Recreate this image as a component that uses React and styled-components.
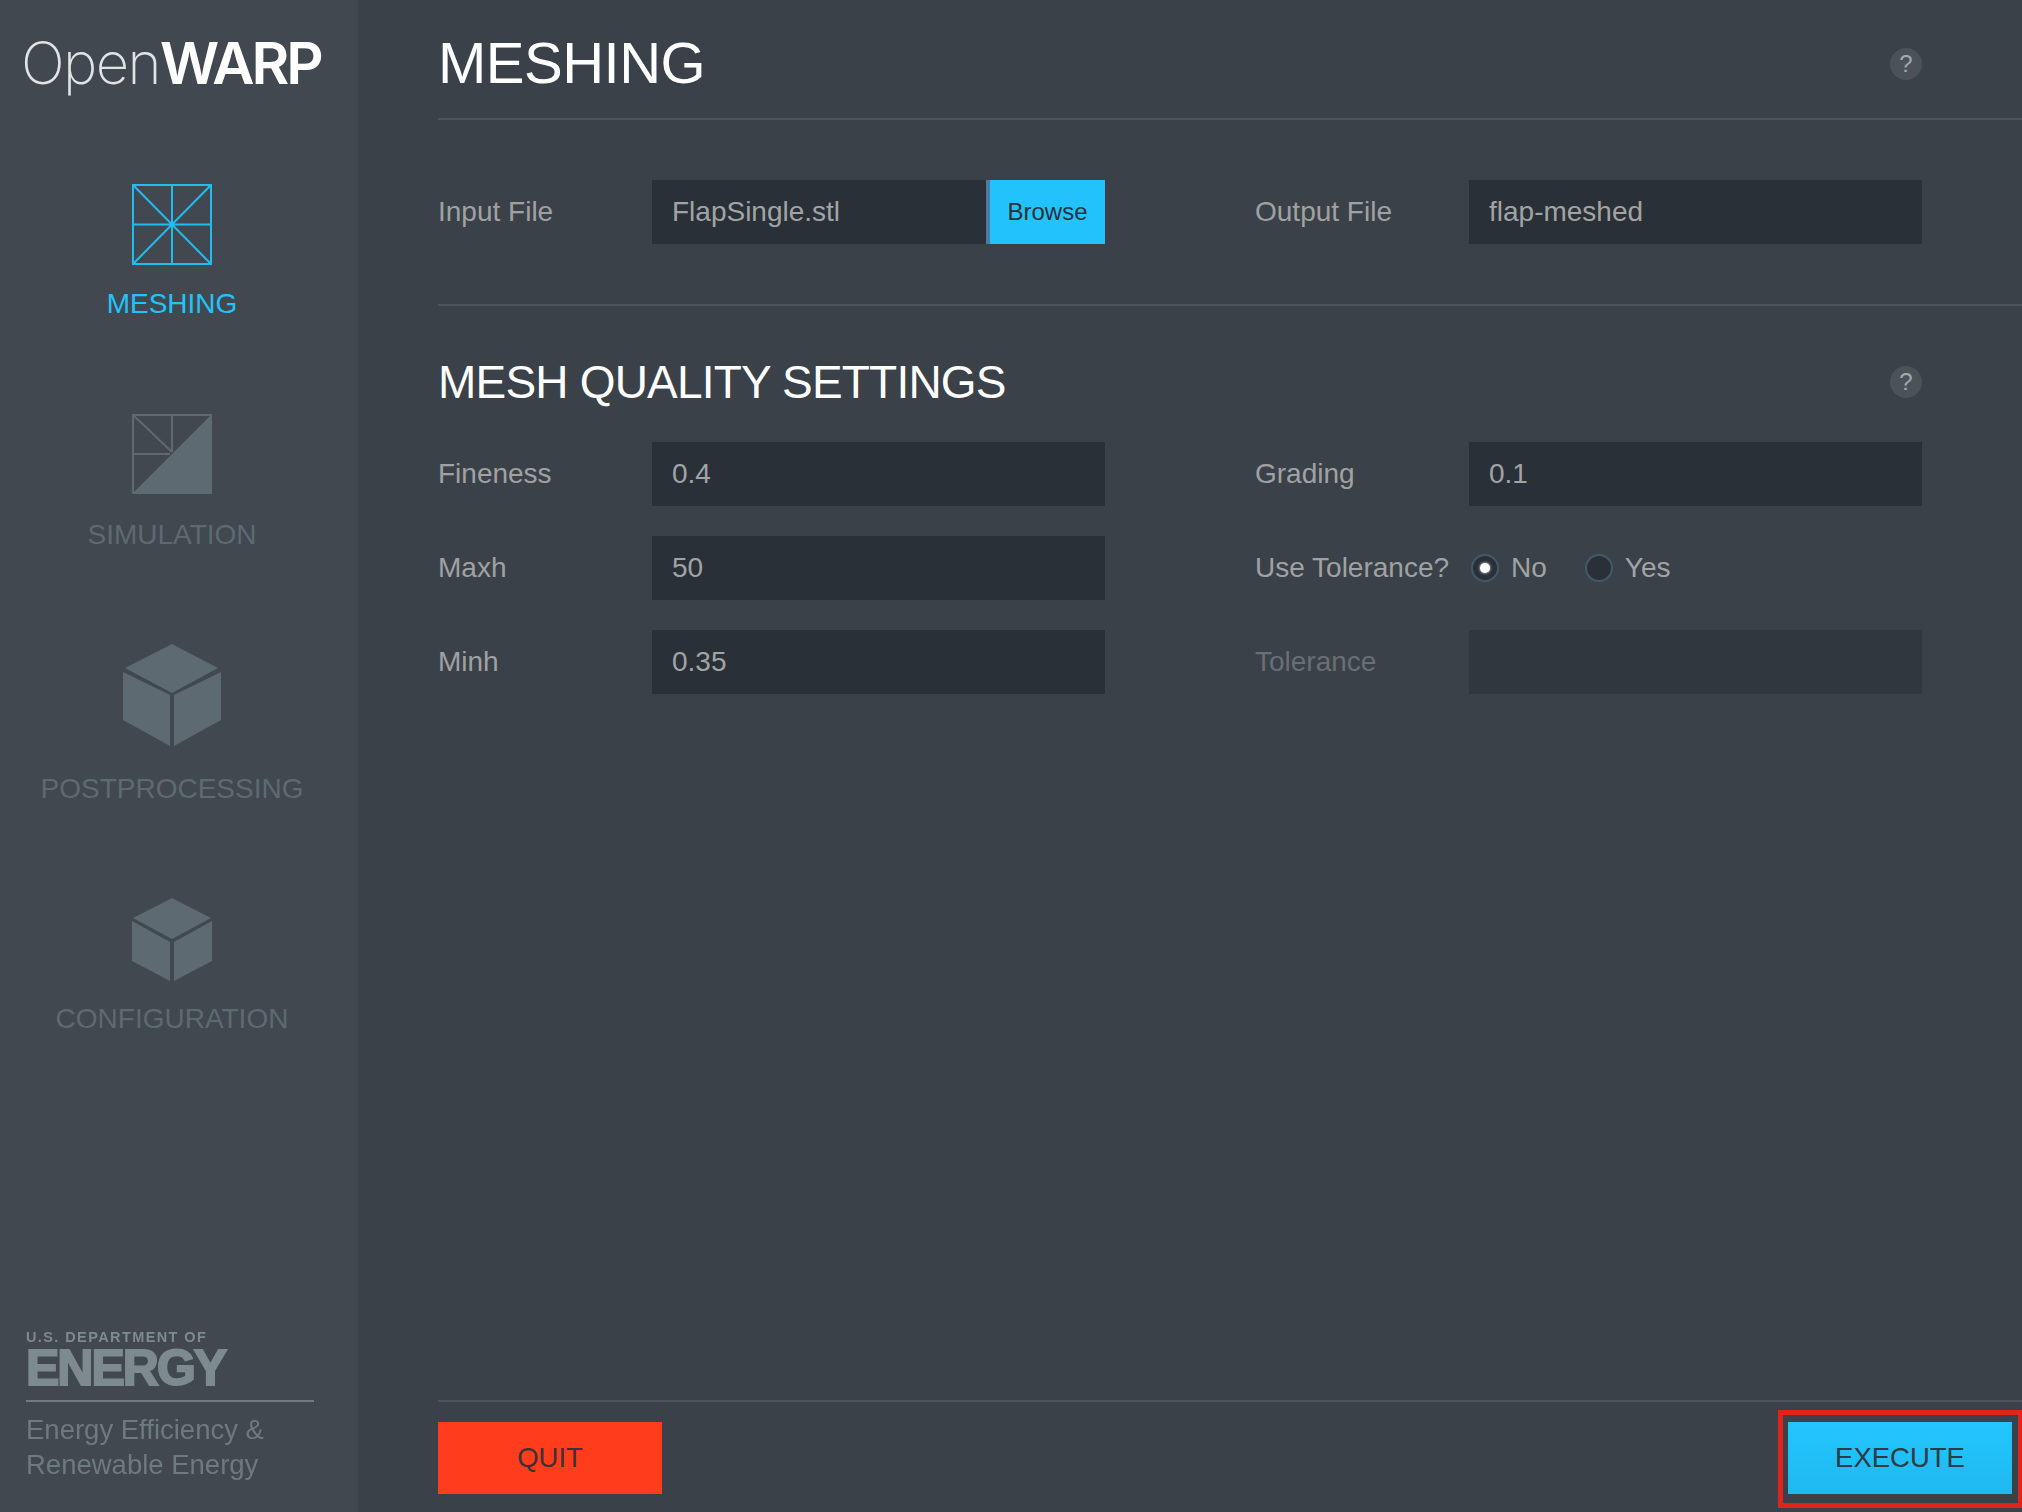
import React from "react";
import styled, { createGlobalStyle } from "styled-components";

const GlobalStyle = createGlobalStyle`
  html, body {
    margin: 0;
    padding: 0;
    background: #3a4149;
  }
  * {
    box-sizing: border-box;
  }
`;

const MeshIcon = () => (
  <svg width="80" height="81" viewBox="0 0 80 81" fill="none" stroke="#22bdf0" strokeWidth="2">
    <rect x="1" y="1" width="78" height="79" />
    <path d="M1 1 L79 80 M79 1 L1 80 M40 1 V80 M1 40.5 H79" />
    <circle cx="40" cy="40.5" r="2.5" fill="#22bdf0" stroke="none" />
  </svg>
);

const SimulationIcon = () => (
  <svg width="80" height="81" viewBox="0 0 80 81" fill="none" stroke="#5d6a72" strokeWidth="2">
    <rect x="1" y="1" width="78" height="78" />
    <path d="M1 1 L40 38 M40 1 V38 M1 40 H38" />
    <path d="M80 0 V80 H0 Z" fill="#5d6a72" stroke="none" />
  </svg>
);

const BigCube = () => (
  <svg width="98" height="103" viewBox="0 0 98 103" fill="#5d6a72">
    <path d="M49 0 L95 24 L49 49 L2 24 Z" />
    <path d="M0 28 L47 51 V102 L0 76 Z" />
    <path d="M51 51 L98 28 V76 L51 102 Z" />
  </svg>
);

const SmallCube = () => (
  <svg width="80" height="84" viewBox="0 0 80 84" fill="#5d6a72">
    <path d="M40 0 L79 20 L40 41 L1 20 Z" />
    <path d="M0 23 L38 44 V83 L0 63 Z" />
    <path d="M42 44 L80 23 V63 L42 83 Z" />
  </svg>
);

function NavEntry(props) {
  return (
    <NavItem $active={props.active} $height={props.height}>
      <NavIcon $height={props.iconHeight}>{props.icon}</NavIcon>
      <NavLabel>{props.label}</NavLabel>
    </NavItem>
  );
}

function Field(props) {
  return (
    <FieldRow>
      <FieldLabel $disabled={props.disabled}>{props.label}</FieldLabel>
      {props.children ? (
        props.children
      ) : (
        <TextBox $disabled={props.disabled}>{props.value}</TextBox>
      )}
    </FieldRow>
  );
}

function App() {
  return (
    <Page>
      <GlobalStyle />
      <Sidebar>
        <Logo>
          <LogoThin>Open</LogoThin>
          <LogoBold>WARP</LogoBold>
        </Logo>
        <Nav>
          <NavEntry active height={230} iconHeight={84} icon={<MeshIcon />} label="MESHING" />
          <NavEntry height={230} iconHeight={85} icon={<SimulationIcon />} label="SIMULATION" />
          <NavEntry height={254} iconHeight={109} icon={<BigCube />} label="POSTPROCESSING" />
          <NavEntry height={140} iconHeight={85} icon={<SmallCube />} label="CONFIGURATION" />
        </Nav>
        <EnergyLogo>
          <Department>U.S. DEPARTMENT OF</Department>
          <EnergyWord>ENERGY</EnergyWord>
          <EnergyText>
            Energy Efficiency &amp;
            <br />
            Renewable Energy
          </EnergyText>
        </EnergyLogo>
      </Sidebar>

      <Main>
        <PageHeader>
          <PageTitle>MESHING</PageTitle>
          <HelpButton>?</HelpButton>
        </PageHeader>

        <FileSection>
          <FieldGrid>
            <Field label="Input File">
              <FileBox>
                <FileName>FlapSingle.stl</FileName>
                <BrowseButton>Browse</BrowseButton>
              </FileBox>
            </Field>
            <Field label="Output File" value="flap-meshed" />
          </FieldGrid>
        </FileSection>

        <SectionHeader>
          <SectionTitle>MESH QUALITY SETTINGS</SectionTitle>
          <HelpButton>?</HelpButton>
        </SectionHeader>

        <FieldGrid>
          <Field label="Fineness" value="0.4" />
          <Field label="Grading" value="0.1" />
          <Field label="Maxh" value="50" />
          <Field label="Use Tolerance?">
            <RadioGroup>
              <RadioOption>
                <Radio $checked />
                No
              </RadioOption>
              <RadioOption>
                <Radio />
                Yes
              </RadioOption>
            </RadioGroup>
          </Field>
          <Field label="Minh" value="0.35" />
          <Field label="Tolerance" disabled />
        </FieldGrid>

        <Footer>
          <QuitButton>QUIT</QuitButton>
          <ExecuteButton>EXECUTE</ExecuteButton>
        </Footer>
      </Main>
      <Highlight />
    </Page>
  );
}

export default App;

const Page = styled.div`
  position: relative;
  width: 2022px;
  height: 1512px;
  display: flex;
  overflow: hidden;
  font-family: "Liberation Sans", Arial, sans-serif;
  background: #3a4149;
`;

const Sidebar = styled.aside`
  width: 358px;
  height: 100%;
  flex-shrink: 0;
  display: flex;
  flex-direction: column;
  background: #41484f;
`;

const Logo = styled.div`
  height: 184px;
  padding: 23px 0 0 21px;
  font-family: Inter, sans-serif;
  font-size: 58px;
  line-height: 80px;
  white-space: nowrap;
  filter: blur(0.4px);
`;

const LogoThin = styled.span`
  font-weight: 200;
  letter-spacing: -1.6px;
  color: #e2e3e4;
`;

const LogoBold = styled.span`
  font-weight: 600;
  letter-spacing: -3px;
  color: #ffffff;
`;

const Nav = styled.nav`
  width: 344px;
  display: flex;
  flex-direction: column;
`;

const NavItem = styled.div`
  height: ${(props) => props.$height}px;
  display: flex;
  flex-direction: column;
  align-items: center;
  color: ${(props) => (props.$active ? "#22c3fd" : "#5d6a72")};
`;

const NavIcon = styled.div`
  height: ${(props) => props.$height}px;
  margin-bottom: 20px;

  svg {
    display: block;
  }
`;

const NavLabel = styled.div`
  font-size: 28px;
  line-height: 32px;
`;

const EnergyLogo = styled.div`
  margin-top: auto;
  padding: 0 0 30px 26px;
  color: #7d8a8f;
  filter: blur(0.4px);
`;

const Department = styled.div`
  font-size: 14.5px;
  font-weight: 700;
  line-height: 16px;
  letter-spacing: 1.4px;
  white-space: nowrap;
`;

const EnergyWord = styled.div`
  width: 288px;
  padding-bottom: 9px;
  border-bottom: 2px solid #6f7b80;
  font-size: 50px;
  font-weight: 700;
  line-height: 46px;
  letter-spacing: -2px;
  -webkit-text-stroke: 2px #7d8a8f;
`;

const EnergyText = styled.div`
  margin-top: 10px;
  font-size: 27.5px;
  line-height: 35px;
  color: #6d7a80;
  white-space: nowrap;
`;

const Main = styled.main`
  flex: 1;
  min-width: 0;
  height: 100%;
  padding-left: 80px;
  display: flex;
  flex-direction: column;
`;

const PageHeader = styled.header`
  height: 120px;
  padding: 10px 100px 0 0;
  flex-shrink: 0;
  display: flex;
  align-items: center;
  justify-content: space-between;
  border-bottom: 2px solid #4d545b;
`;

const PageTitle = styled.h1`
  margin: -2px 0 0;
  font-size: 58px;
  font-weight: 400;
  line-height: 64px;
  letter-spacing: -0.5px;
  color: #ffffff;
`;

const HelpButton = styled.div`
  width: 32px;
  height: 32px;
  border-radius: 50%;
  display: flex;
  align-items: center;
  justify-content: center;
  background: #4b5359;
  color: #a3a8ab;
  font-size: 24px;
`;

const FileSection = styled.section`
  padding: 60px 0 60px;
  flex-shrink: 0;
  border-bottom: 2px solid #4d545b;
`;

const FieldGrid = styled.div`
  display: grid;
  grid-template-columns: 667px 667px;
  column-gap: 150px;
  row-gap: 30px;
`;

const FieldRow = styled.div`
  display: grid;
  grid-template-columns: 214px 453px;
  align-items: center;
  height: 64px;
`;

const FieldLabel = styled.label`
  font-size: 28px;
  color: ${(props) => (props.$disabled ? "#696f74" : "#a0a1a2")};
`;

const TextBox = styled.div`
  height: 64px;
  padding: 0 20px;
  display: flex;
  align-items: center;
  font-size: 28px;
  color: #a3a3a3;
  background: ${(props) => (props.$disabled ? "#30373e" : "#293037")};
`;

const FileBox = styled.div`
  height: 64px;
  display: flex;
  background: #293037;
`;

const FileName = styled.div`
  flex: 1;
  padding: 0 20px;
  display: flex;
  align-items: center;
  font-size: 28px;
  color: #a3a3a3;
`;

const BrowseButton = styled.button`
  width: 119px;
  height: 64px;
  padding: 0;
  border: none;
  border-left: 4px solid #4c7aa0;
  background: #22c3fd;
  color: #2a3138;
  font-family: inherit;
  font-size: 24px;
`;

const SectionHeader = styled.div`
  padding: 44px 100px 28px 0;
  flex-shrink: 0;
  display: flex;
  align-items: center;
  justify-content: space-between;
`;

const SectionTitle = styled.h2`
  margin: 0;
  font-size: 46px;
  font-weight: 400;
  line-height: 64px;
  letter-spacing: -0.8px;
  color: #ffffff;
`;

const RadioGroup = styled.div`
  display: flex;
  gap: 38px;
  padding-left: 2px;
`;

const RadioOption = styled.label`
  display: flex;
  align-items: center;
  gap: 12px;
  font-size: 28px;
  color: #a3a3a3;
`;

const Radio = styled.span`
  width: 28px;
  height: 28px;
  flex-shrink: 0;
  border-radius: 50%;
  display: flex;
  align-items: center;
  justify-content: center;
  border: 2px solid #43596a;
  background: #293037;

  &::after {
    content: "";
    width: 10px;
    height: 10px;
    border-radius: 50%;
    background: ${(props) => (props.$checked ? "#ffffff" : "transparent")};
    box-shadow: ${(props) => (props.$checked ? "0 0 3px #ffffff" : "none")};
  }
`;

const Footer = styled.footer`
  margin-top: auto;
  height: 112px;
  padding: 20px 10px 18px 0;
  flex-shrink: 0;
  display: flex;
  justify-content: space-between;
  border-top: 2px solid #4d545b;
`;

const QuitButton = styled.button`
  width: 224px;
  height: 72px;
  padding: 0;
  border: none;
  background: #ff3d1c;
  color: #3a3335;
  font-family: inherit;
  font-size: 27.5px;
`;

const ExecuteButton = styled(QuitButton)`
  background: linear-gradient(#23c6ff, #20b8ef);
  color: #2f3a44;
`;

const Highlight = styled.div`
  position: absolute;
  left: 1778px;
  top: 1410px;
  width: 244px;
  height: 98px;
  border: 5px solid #e2231a;
  border-right-width: 4px;
`;
